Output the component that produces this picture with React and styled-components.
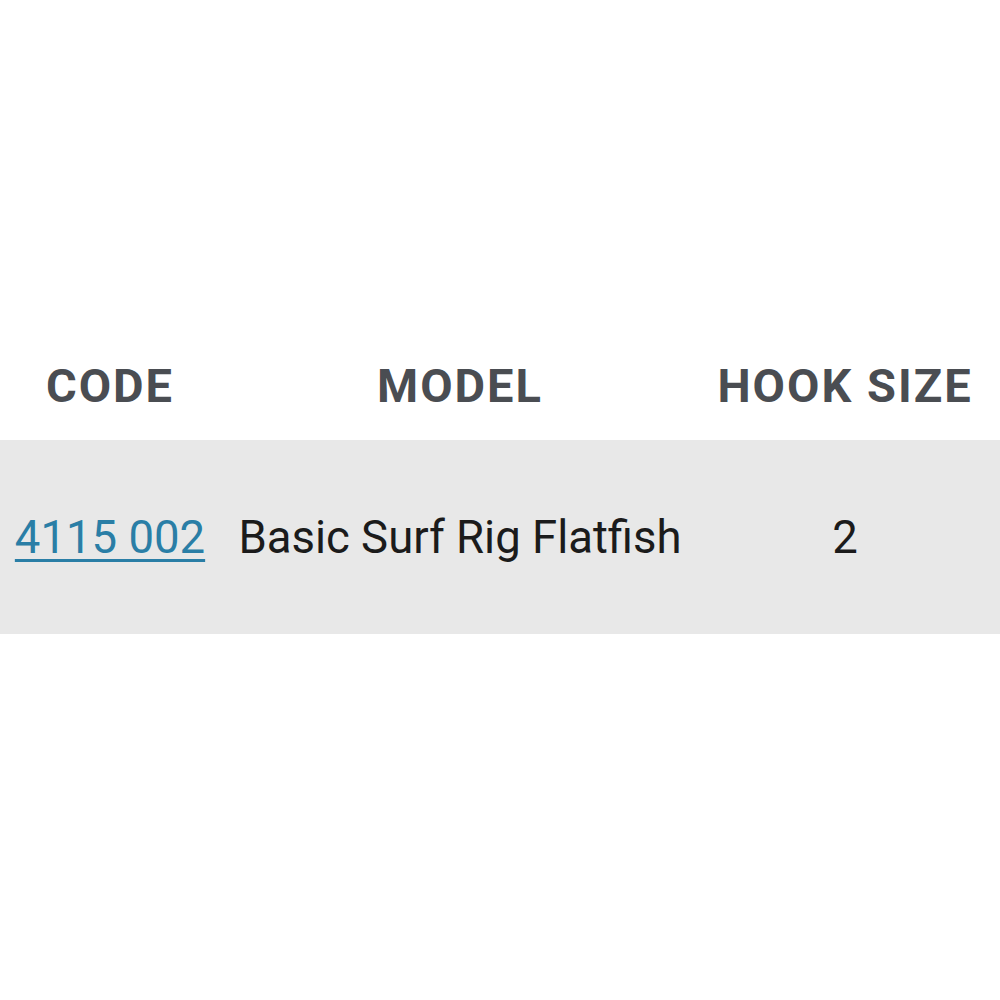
import React from "react";
import styled, { createGlobalStyle } from "styled-components";

const Global = createGlobalStyle`
  html, body { margin: 0; padding: 0; background: #ffffff; }
  body { font-family: Roboto, "Liberation Sans", Arial, sans-serif; }
`;

const Page = styled.div`
  width: 1000px;
  height: 1000px;
  display: flex;
  flex-direction: column;
  padding-top: 340px;
  box-sizing: border-box;
`;

const Table = styled.div`
  display: grid;
  grid-template-columns: 220px 480px 290px 10px;
  width: 1000px;
`;

const HeadCell = styled.div`
  height: 100px;
  box-sizing: border-box;
  padding-bottom: 10px;
  display: flex;
  align-items: center;
  justify-content: center;
  font-family: Roboto, "Liberation Sans", sans-serif;
  font-weight: 700;
  font-size: 47px;
  letter-spacing: 2px;
  color: #4a4d52;
  text-transform: uppercase;
  white-space: nowrap;
`;

const Row = styled.div`
  grid-column: 1 / -1;
  display: grid;
  grid-template-columns: subgrid;
  height: 194px;
  background: #e8e8e8;
`;

const Cell = styled.div`
  display: flex;
  align-items: center;
  justify-content: center;
  font-family: Roboto, "Liberation Sans", sans-serif;
  font-size: 45.5px;
  color: #1b1b1b;
  white-space: nowrap;
`;

const CodeLink = styled.a`
  color: #2a7ea6;
  text-decoration: underline;
  text-decoration-thickness: 3px;
  text-underline-offset: 6px;
`;

export default function App() {
  return (
    <>
      <Global />
      <Page>
        <Table>
          <HeadCell>Code</HeadCell>
          <HeadCell>Model</HeadCell>
          <HeadCell>Hook size</HeadCell>
          <span />
          <Row>
            <Cell>
              <CodeLink href="#">4115 002</CodeLink>
            </Cell>
            <Cell>Basic Surf Rig Flatfish</Cell>
            <Cell>2</Cell>
            <span />
          </Row>
        </Table>
      </Page>
    </>
  );
}
